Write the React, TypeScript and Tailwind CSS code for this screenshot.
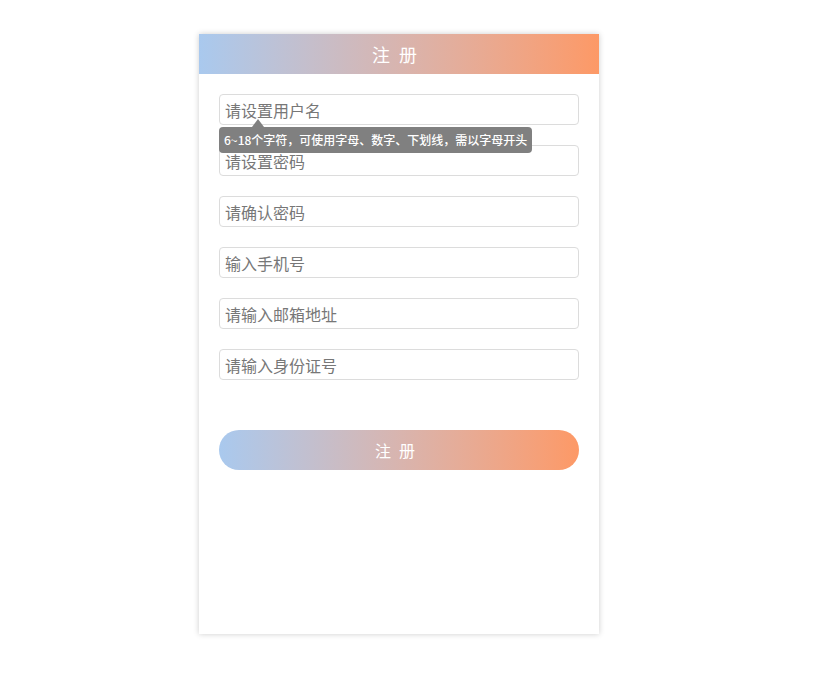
const fields = [
  '请设置用户名',
  '请设置密码',
  '请确认密码',
  '输入手机号',
  '请输入邮箱地址',
  '请输入身份证号',
]

export default function App() {
  return (
    <div className="min-h-[696px] bg-white pt-[34px] pl-[199px] font-['Microsoft_YaHei','Noto_Sans_CJK_SC',sans-serif]">
      <div className="w-[400px] h-[600px] bg-white shadow-[0_0_6px_rgba(0,0,0,0.2)]">
        <div className="h-10 flex items-center justify-center bg-gradient-to-r from-[#a9c9ee] to-[#fd9966] text-white text-lg tracking-[0.5em]">
          注册
        </div>
        <div className="px-5 pt-5">
          {fields.map((p, i) => (
            <div key={p} className="relative mb-5">
              <input
                autoFocus={i === 0}
                placeholder={p}
                className="w-full h-[31px] border border-[#dcdcdc] rounded px-[5px] text-base text-[#333] placeholder:text-[#777] outline-none"
              />
              {i === 0 && (
                <div className="absolute left-0 top-[25px] z-10">
                  <div className="ml-[33px] w-0 h-0 border-x-[6px] border-x-transparent border-b-[8px] border-b-[#808080]" />
                  <div className="bg-[#808080] text-white text-xs font-medium rounded px-[5px] h-[26px] flex items-center whitespace-nowrap">
                    6~18个字符，可使用字母、数字、下划线，需以字母开头
                  </div>
                </div>
              )}
            </div>
          ))}
          <button className="mt-[30px] w-full h-10 rounded-full bg-gradient-to-r from-[#a9c9ee] to-[#fd9966] text-white text-base tracking-[0.5em]">
            注册
          </button>
        </div>
      </div>
    </div>
  )
}
